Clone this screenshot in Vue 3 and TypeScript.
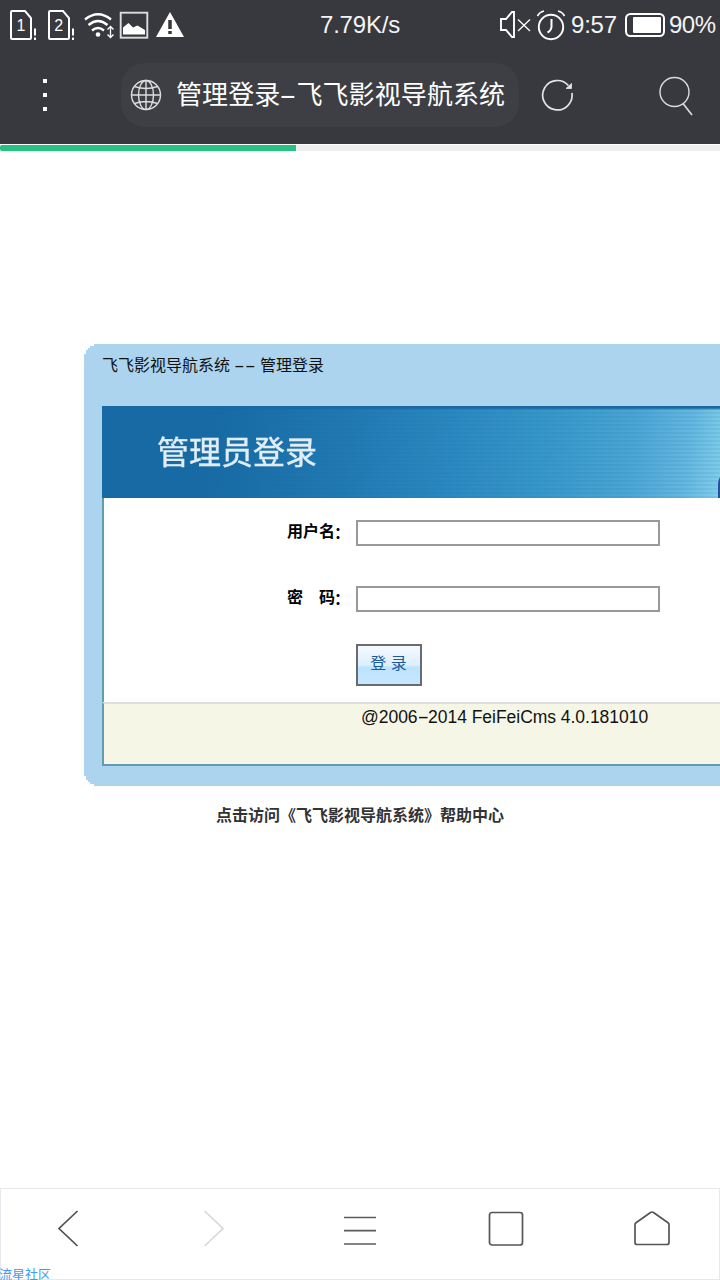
<script setup lang="ts">
import { ref } from 'vue'

const progress = ref(296 / 720)
const user = ref('')
const password = ref('')
</script>

<template>
  <div class="screen">
    <header class="chrome">
      <div class="status">
        <svg class="status-left" width="190" height="48" viewBox="0 0 190 48" fill="none" stroke="#fff">
          <g stroke-width="2">
            <path d="M12 11h13l6 7v20q0 1-1 1H12q-1 0-1-1V12q0-1 1-1z" />
            <path d="M50 11h13l6 7v20q0 1-1 1H50q-1 0-1-1V12q0-1 1-1z" />
            <path d="M35 28.500v7M35 37.500v2.500M73 28.500v7M73 37.500v2.500" />
          </g>
          <g class="sim" fill="#fff" stroke="none">
            <text x="16.500" y="31">1</text>
            <text x="54.300" y="31">2</text>
          </g>
          <g stroke-width="2.300">
            <path d="M85 19.500Q98 9 111 19.500" />
            <path d="M88.500 25Q98 17 107.500 25" />
            <path d="M92 30.500Q98 25.500 104 30.500" />
          </g>
          <circle cx="98" cy="34.500" r="2.300" fill="#fff" stroke="none" />
          <path d="M110.500 27v10M107.500 29.500l3-3 3 3M107.500 34.500l3 3 3-3" stroke-width="1.300" />
          <rect x="120.700" y="12.700" width="26.600" height="25" stroke="#ddd" stroke-width="1.900" />
          <path d="M123 34.500v-7l5.500-4.500 4.500 4.500 4.500-2 7.500 4.500v4.500z" fill="#fff" stroke="none" />
          <path d="M170 12l14 25h-28z" fill="#fff" stroke="none" />
          <path d="M170 20v9M170 31v3" stroke="#38393e" stroke-width="3.500" />
        </svg>
        <span class="speed">7.79K/s</span>
        <div class="status-right">
          <svg width="68" height="48" viewBox="498 0 68 48" fill="none" stroke="#fff">
            <path d="M501 19h5l6-7h2v25h-2l-6-7h-5z" stroke-width="1.900" />
            <path d="M518 19.500l12 11.500M530 19.500L518 31" stroke-width="1.300" />
            <circle cx="551" cy="27" r="12.200" stroke-width="1.900" />
            <path d="M551.500 19v8q-.5 4-4 5.500" stroke-width="2" />
            <path d="M537.500 16q2-4 6.500-5M564.500 16q-2-4-6.500-5" stroke-width="1.700" />
          </svg>
          <span class="clock">9:57</span>
          <svg width="40" height="48" viewBox="625 0 40 48">
            <rect x="626" y="14" width="38" height="22" rx="4.500" fill="none" stroke="#fff" stroke-width="2" />
            <rect x="633" y="17" width="28" height="16" rx="1" fill="#fff" />
          </svg>
          <span class="charge">90%</span>
        </div>
      </div>
      <div class="toolbar">
        <div class="dots"><i></i><i></i><i></i></div>
        <div class="address">
          <svg width="32" height="32" viewBox="0 0 32 32" fill="none" stroke="#dedede" stroke-width="1.400">
            <circle cx="16" cy="16" r="14.500" />
            <ellipse cx="16" cy="16" rx="7.500" ry="14.500" />
            <path d="M16 1.500v29M1.500 16h29M4.500 7.500q11.500 4 23 0M4.500 24.500q11.500-4 23 0" />
          </svg>
          <span class="title">管理登录<i class="dash">-</i>飞飞影视导航系统</span>
        </div>
        <svg class="reload" width="34" height="36" viewBox="540 77 34 36" fill="none" stroke="#e4e4e4">
          <path d="M571.900 93a14.700 14.700 0 1 1-3.500-7.500" stroke-width="1.700" />
          <path d="M566 88.500h5.500v-5z" fill="#e4e4e4" stroke-width=".8" />
        </svg>
        <svg class="search" width="36" height="42" viewBox="658 75 36 42" fill="none" stroke="#dcdcdc">
          <circle cx="674.500" cy="92" r="14.500" stroke-width="1.400" />
          <path d="M683 103.500l9 11.500" stroke-width="1.700" />
        </svg>
      </div>
    </header>
    <div class="track"><div class="bar" :style="{ width: progress * 100 + '%' }"></div></div>

    <main class="page">
      <section class="panel">
        <h1>飞飞影视导航系统 <i class="dash">-</i><i class="dash">-</i> 管理登录</h1>
        <div class="box">
          <div class="banner">
            <span>管理员登录</span>
            <svg width="3" height="21" viewBox="0 0 3 21"><path d="M3 0Q1 3 1 7v14h2z" fill="#2450a0" /></svg>
          </div>
          <form class="form" @submit.prevent>
            <label><b>用户名<i>：</i></b><input v-model="user" type="text" /></label>
            <label><b>密　码<i>：</i></b><input v-model="password" type="password" /></label>
            <button type="submit">登 录</button>
          </form>
          <footer>@2006<i class="dash">-</i>2014 FeiFeiCms 4.0.181010</footer>
        </div>
      </section>
      <a class="help">点击访问《飞飞影视导航系统》帮助中心</a>
    </main>

    <nav class="nav">
      <svg viewBox="0 0 40 40"><path d="M29.500 3L11 20.500 29.500 38" stroke="#505050" /></svg>
      <svg viewBox="0 0 40 40"><path d="M10.500 3L29 20.500 10.500 38" stroke="#d8d8d8" /></svg>
      <svg viewBox="0 0 40 40"><path d="M4 9.500h32M4 22.700h32M4 36h32" stroke="#5c5c5c" /></svg>
      <svg viewBox="0 0 40 40"><rect x="3.500" y="4.500" width="33" height="32.500" rx="2.500" stroke="#555" /></svg>
      <svg viewBox="0 0 40 40"><path d="M3 16.500q0-1 1-1.700L18.500 4.500q1.500-1 3 0L36 14.800q1 .7 1 1.700v18q0 2-2 2H5q-2 0-2-2z" stroke="#555" /></svg>
      <span class="mark">流星社区</span>
    </nav>
  </div>
</template>

<style>
body {
  margin: 0;
  overflow: hidden;
}
</style>

<style scoped>
.screen {
  width: 720px;
  height: 1280px;
  overflow: hidden;
  display: flex;
  flex-direction: column;
  background: #fff;
  font-family: "Liberation Sans", "Noto Sans CJK SC", sans-serif;
}
.chrome {
  height: 144px;
  background: #38393e;
  color: #f4f4f4;
  flex: none;
}
.status {
  height: 48px;
  display: grid;
  grid-template-columns: 320px 1fr 222px;
  font-size: 24px;
  line-height: 50px;
  white-space: nowrap;
}
.sim {
  font-size: 16px;
  font-family: "Liberation Sans", sans-serif;
}
.speed {
  letter-spacing: -0.2px;
}
.status-right {
  display: flex;
}
.clock {
  width: 54px;
  margin-left: 5px;
  letter-spacing: -0.2px;
}
.charge {
  margin-left: 4px;
  letter-spacing: -0.5px;
}
.toolbar {
  height: 96px;
  display: flex;
  align-items: flex-start;
}
.dots {
  width: 5px;
  margin: 31px 73px 0 43px;
  display: flex;
  flex-direction: column;
  gap: 10px;
}
.dots i {
  width: 4px;
  height: 4px;
  background: #fff;
}
.address {
  width: 398px;
  height: 64px;
  margin-top: 15px;
  border-radius: 24px;
  background: #3e3f44;
  display: flex;
  align-items: center;
  box-sizing: border-box;
  padding-left: 9px;
}
.title {
  margin-left: 14px;
  font-size: 26px;
  line-height: 62px;
  height: 62px;
  letter-spacing: 0.1px;
  white-space: nowrap;
  color: #fff;
}
.dash {
  font-style: normal;
  display: inline-block;
  text-align: center;
  transform: scaleX(2);
}
.title .dash {
  width: 16px;
}
.reload {
  margin: 29px 0 0 21px;
}
.search {
  margin: 27px 0 0 84px;
}
.track {
  height: 6px;
  margin-top: 1px;
  background: #eee;
  flex: none;
}
.bar {
  height: 6px;
  background: #26c281;
  border-radius: 2px 0 0 2px;
}
.page {
  flex: 1;
  padding: 193px 0 0;
  display: flex;
  flex-direction: column;
}
.panel {
  box-sizing: border-box;
  height: 442px;
  margin-left: 84px;
  padding-left: 18px;
  background: #acd4ee;
  clip-path: polygon(0 10px, 2px 10px, 2px 6px, 4px 6px, 4px 4px, 6px 4px, 6px 2px, 10px 2px, 10px 0, 100% 0, 100% 100%, 10px 100%, 10px 440px, 6px 440px, 6px 438px, 4px 438px, 4px 436px, 2px 436px, 2px 432px, 0 432px);
}
h1 {
  margin: 0;
  height: 62px;
  font-size: 16px;
  font-weight: 400;
  line-height: 43px;
  color: #111;
  white-space: pre;
}
h1 .dash {
  width: 10.500px;
}
.box {
  height: 360px;
  box-sizing: border-box;
  border-bottom: 2px solid #629cb2;
  display: flex;
  flex-direction: column;
}
.banner {
  height: 92px;
  box-sizing: border-box;
  padding-left: 55px;
  display: flex;
  justify-content: space-between;
  background:
    linear-gradient(#1968a0 0 2px, transparent 4px),
    repeating-linear-gradient(transparent 0 2px, rgba(10, 110, 165, 0.1) 2px 4px),
    linear-gradient(98deg, #176aa3 18%, #2279b2 40%, #2d88c0 57%, #3997ca 72%, #4ba5d4 85%, #65b7df 94%, #83cfea 100%);
  font-size: 32px;
  line-height: 95px;
  color: #e2edf6;
}
.banner span {
  filter: blur(0.6px);
  -webkit-text-stroke: 0.4px #e2edf6;
}
.banner svg {
  align-self: flex-end;
}
.form {
  height: 204px;
  box-sizing: border-box;
  border-left: 2px solid #629cb2;
  background: #fff;
  padding: 22px 0 0 183px;
}
label {
  display: flex;
  height: 26px;
  margin-bottom: 40px;
  font-size: 16px;
  line-height: 24px;
}
label b {
  width: 69px;
  color: #000;
}
label i {
  position: relative;
  top: 2px;
  left: -1px;
  font-style: normal;
}
input {
  width: 304px;
  height: 26px;
  box-sizing: border-box;
  padding: 0 4px;
  border: 2px solid #999;
  border-radius: 0;
  background: #fff;
  outline: none;
}
button {
  display: block;
  width: 66px;
  height: 42px;
  margin: -8px 0 0 69px;
  padding: 0 1px 6px 0;
  border: 2px solid #686b70;
  border-radius: 0;
  background: linear-gradient(#f6f9fe, #dceffd 50%, #bce3fd 56%, #c6e8fd);
  color: #1c5a9c;
  font: 16px "Liberation Sans", "Noto Sans CJK SC", sans-serif;
}
footer {
  flex: 1;
  border-left: 2px solid #629cb2;
  border-top: 2px solid #ddd;
  background: #f5f6e5;
  padding-left: 257px;
  font-size: 17.500px;
  line-height: 27px;
  letter-spacing: -0.03px;
  color: #111;
}
footer .dash {
  width: 10.500px;
}
.help {
  margin: 18px 0 0 216px;
  font-size: 16px;
  line-height: 24px;
  font-weight: 700;
  color: #333;
  white-space: nowrap;
}
.nav {
  position: relative;
  flex: none;
  height: 92px;
  box-sizing: border-box;
  border: 1px solid #e6e8ee;
  display: flex;
  justify-content: space-between;
  padding: 19px 47px 0;
}
.nav svg {
  width: 40px;
  height: 40px;
  fill: none;
  stroke-width: 1.700;
}
.mark {
  position: absolute;
  left: -2px;
  bottom: -5px;
  font-size: 13px;
  line-height: 18px;
  color: #429bee;
}
</style>
